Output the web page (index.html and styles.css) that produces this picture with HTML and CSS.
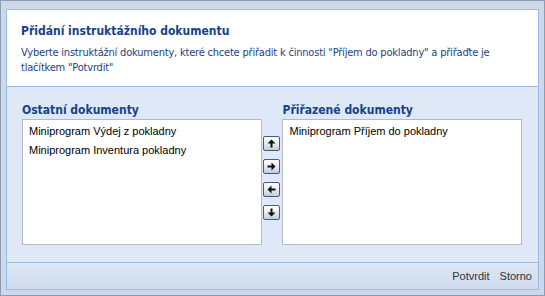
FILE: index.html
```html
<!DOCTYPE html>
<html lang="cs">
<head>
    <meta charset="UTF-8">
    <title>Přidání instruktážního dokumentu</title>
    <link rel="stylesheet" href="styles.css">
</head>
<body>
<div class="window">
    <div class="inner">
        <!-- Header -->
        <div class="header">
            <h1>Přidání instruktážního dokumentu</h1>
            <p>Vyberte instruktážní dokumenty, které chcete přiřadit k činnosti "Příjem do pokladny" a přiřaďte je tlačítkem "Potvrdit"</p>
        </div>

        <!-- Lists -->
        <div class="body">
            <div class="column">
                <h2>Ostatní dokumenty</h2>
                <ul class="list">
                    <li>Miniprogram Výdej z pokladny</li>
                    <li>Miniprogram Inventura pokladny</li>
                </ul>
            </div>
            <div class="arrows">
                <button class="arrow" title="Nahoru">
                    <svg width="9" height="9" viewBox="0 0 9 9"><path d="M4.5 0.5 L8.5 4.5 L5.5 4.5 L5.5 8.5 L3.5 8.5 L3.5 4.5 L0.5 4.5 Z" fill="#111"/></svg>
                </button>
                <button class="arrow" title="Přiřadit">
                    <svg width="9" height="9" viewBox="0 0 9 9"><path d="M8.5 4.5 L4.5 0.5 L4.5 3.5 L0.5 3.5 L0.5 5.5 L4.5 5.5 L4.5 8.5 Z" fill="#111"/></svg>
                </button>
                <button class="arrow" title="Odebrat">
                    <svg width="9" height="9" viewBox="0 0 9 9"><path d="M0.5 4.5 L4.5 0.5 L4.5 3.5 L8.5 3.5 L8.5 5.5 L4.5 5.5 L4.5 8.5 Z" fill="#111"/></svg>
                </button>
                <button class="arrow" title="Dolů">
                    <svg width="9" height="9" viewBox="0 0 9 9"><path d="M4.5 8.5 L8.5 4.5 L5.5 4.5 L5.5 0.5 L3.5 0.5 L3.5 4.5 L0.5 4.5 Z" fill="#111"/></svg>
                </button>
            </div>
            <div class="column">
                <h2>Přiřazené dokumenty</h2>
                <ul class="list">
                    <li>Miniprogram Příjem do pokladny</li>
                </ul>
            </div>
        </div>

        <!-- Footer -->
        <div class="footer">
            <a href="#" class="link">Potvrdit</a>
            <a href="#" class="link">Storno</a>
        </div>
    </div>
</div>
</body>
</html>
```

FILE: styles.css
```css
body {
    margin: 0;
    padding: 0;
    background: #fff;
    font-family: 'DejaVu Sans Condensed', 'DejaVu Sans', sans-serif;
}

.window {
    width: 545px;
    height: 296px;
    box-sizing: border-box;
    border: 1px solid #8b9cb3;
    background: #cdd9e9;
    padding: 8px 5px 5px 5px;
}

.inner {
    height: 100%;
    box-sizing: border-box;
    border: 1px solid #99bbe8;
    display: flex;
    flex-direction: column;
}

/* Header */
.header {
    background: #fff;
    height: 77px;
    border-bottom: 1px solid #99bbe8;
    padding: 14px 14px 0 14px;
    box-sizing: border-box;
    color: #15428b;
}

.header h1 {
    margin: 0;
    font-size: 12px;
    font-weight: bold;
    line-height: 15px;
}

.header p {
    margin: 6px 0 0 0;
    font-size: 11px;
    line-height: 15px;
    letter-spacing: -0.2px;
    color: #1e3f7e;
}

/* Body */
.body {
    flex: 1;
    background: #dfe8f6;
    display: flex;
    padding: 16px 16px 0 15px;
}

.column {
    display: flex;
    flex-direction: column;
    width: 240px;
}

.column h2 {
    margin: 0 0 1px 0;
    font-size: 12px;
    font-weight: bold;
    color: #15428b;
    line-height: 15px;
}

.list {
    list-style: none;
    margin: 0;
    padding: 2px 0 0 0;
    height: 126px;
    box-sizing: border-box;
    background: #fff;
    border: 1px solid #b5b8c8;
    font-family: 'Liberation Sans', Arial, sans-serif;
    font-size: 11px;
    color: #000;
}

.list li {
    padding: 0 6px;
    line-height: 19px;
}

.arrows {
    width: 21px;
    display: flex;
    flex-direction: column;
    align-items: center;
    padding-top: 33px;
    gap: 8px;
}

.arrow {
    width: 17px;
    height: 15px;
    padding: 0;
    border: 1px solid #3b5e91;
    border-radius: 2px;
    background: linear-gradient(#ffffff, #e8ebef 50%, #c6ccd5);
    display: flex;
    align-items: center;
    justify-content: center;
    cursor: pointer;
}

.arrow svg {
    display: block;
}

/* Footer */
.footer {
    height: 26px;
    border-top: 1px solid #99bbe8;
    background: linear-gradient(#dce6f4, #cfdcee);
    display: flex;
    justify-content: flex-end;
    align-items: center;
    gap: 10px;
    padding-right: 6px;
}

.link {
    font-family: 'Liberation Sans', Arial, sans-serif;
    font-size: 11px;
    color: #333;
    text-decoration: none;
}
```
